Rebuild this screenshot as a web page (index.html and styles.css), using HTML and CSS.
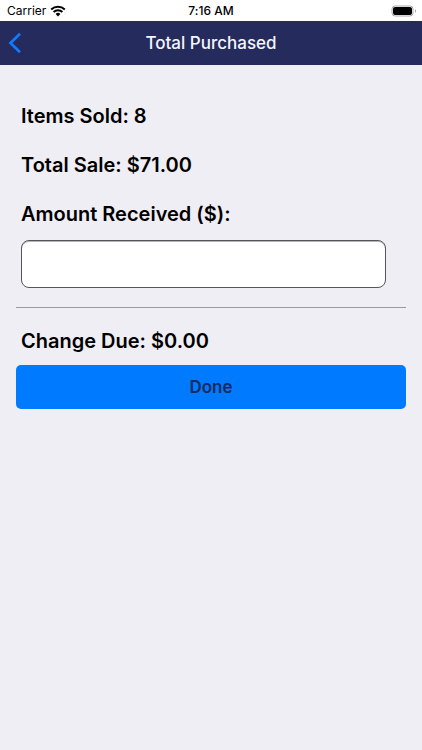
FILE: index.html
```html
<!DOCTYPE html>
<html lang="en">
<head>
<meta charset="utf-8">
<meta name="viewport" content="width=device-width, initial-scale=1">
<title>Total Purchased</title>
<link rel="stylesheet" href="styles.css">
</head>
<body>
<div class="status">
  <div class="carrier">
    <span>Carrier</span>
    <svg class="wifi" viewBox="0 0 16 12" aria-hidden="true">
      <path d="M1.2 4.5a9.8 9.8 0 0 1 13.6 0M3.6 7a6.3 6.3 0 0 1 8.8 0" fill="none" stroke="#000" stroke-width="2"/>
      <path d="M8 11.4 5.6 9a3.4 3.4 0 0 1 4.8 0z" fill="#000"/>
    </svg>
  </div>
  <time class="clock">7:16 AM</time>
  <svg class="battery" viewBox="0 0 26 12" aria-hidden="true">
    <rect x="1" y="1" width="21" height="10" rx="3" fill="#fff" stroke="#aaa"/>
    <rect x="2" y="2" width="19" height="8" rx="2" fill="#000"/>
    <path d="M24 4.3c1.3.6 1.3 2.8 0 3.4z" fill="#999"/>
  </svg>
</div>
<header class="nav">
  <button class="back" type="button" aria-label="Back">
    <svg viewBox="0 0 14 22" aria-hidden="true"><path d="M12 1.8 2.5 11l9.5 9.2" fill="none" stroke="#127aff" stroke-width="2.7"/></svg>
  </button>
  <h1>Total Purchased</h1>
</header>
<main>
  <form class="sale">
    <p class="line">Items Sold: 8</p>
    <p class="line">Total Sale: $71.00</p>
    <label class="line" for="amount">Amount Received ($):</label>
    <input class="amount" id="amount" type="text" inputmode="decimal">
    <hr>
    <p class="line change">Change Due: $0.00</p>
    <button class="done" type="button">Done</button>
  </form>
</main>
</body>
</html>
```
FILE: styles.css
```css
* {
  box-sizing: border-box;
}

body {
  margin: 0;
  min-height: 100vh;
  background: #efeef5;
  color: #000;
  font-family: Inter, "Liberation Sans", sans-serif;
  font-variant-ligatures: no-contextual;
}

.status {
  display: grid;
  grid-template-columns: 1fr auto 1fr;
  align-items: center;
  height: 21px;
  padding: 1px 5px 0;
  background: #fff;
  font-size: 12px;
  line-height: 20px;
}

.carrier {
  display: flex;
  align-items: center;
  gap: 4px;
  padding-left: 2px;
}

.wifi {
  width: 16px;
  height: 12px;
}

.clock {
  font-weight: 500;
}

.battery {
  justify-self: end;
  width: 26px;
  height: 12px;
}

.nav {
  display: grid;
  grid-template-columns: 1fr auto 1fr;
  align-items: center;
  height: 44px;
  padding: 0 8px;
  background: #252b5c;
  color: #f4f5fb;
}

.nav h1 {
  margin: 0;
  font-size: 17px;
  font-weight: 500;
  line-height: 24px;
}

.back {
  display: flex;
  justify-self: start;
  padding: 0;
  border: 0;
  background: none;
}

.back svg {
  width: 14px;
  height: 22px;
}

.sale {
  padding: 39px 16px 0;
}

.line {
  display: block;
  margin: 0 5px 25px;
  font-size: 20px;
  font-weight: 600;
  line-height: 24px;
}

label.line {
  margin-bottom: 14px;
}

.amount {
  display: block;
  width: calc(100% - 25px);
  height: 48px;
  margin: 0 5px;
  padding: 0 12px;
  border: 1px solid #56565a;
  border-radius: 8px;
  background: #fff;
  box-shadow: inset 0 1px #b4b3b6;
  font: inherit;
  font-size: 20px;
}

hr {
  height: 1px;
  margin: 19px 0 21px;
  border: 0;
  background: #99989e;
}

.change {
  margin-bottom: 12px;
}

.done {
  display: block;
  width: 100%;
  height: 44px;
  padding: 0;
  border: 0;
  border-radius: 5px;
  background: #007aff;
  color: #172a60;
  font: inherit;
  font-size: 17px;
  font-weight: 600;
}
```
